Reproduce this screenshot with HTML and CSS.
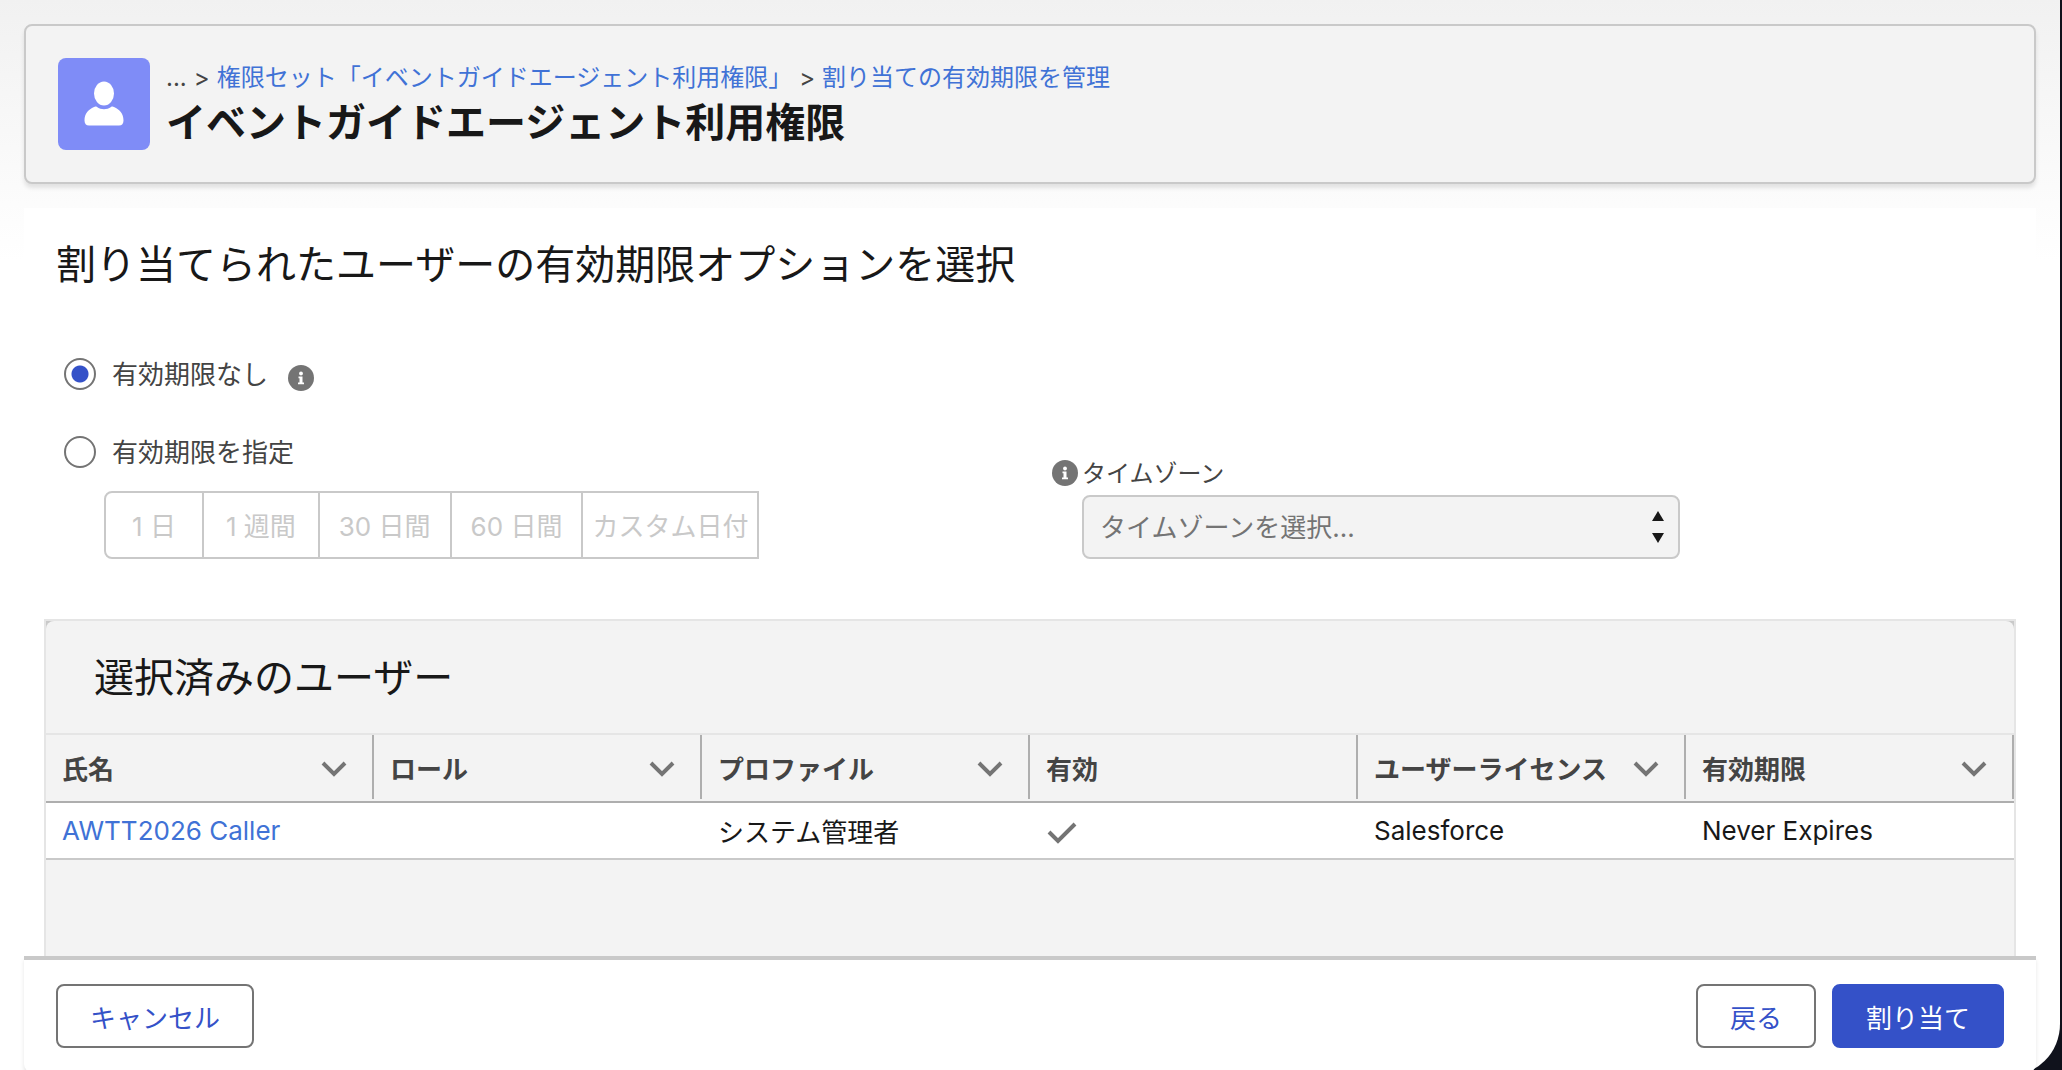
FILE: index.html
```html
<!DOCTYPE html>
<html lang="ja">
<head>
    <meta charset="UTF-8">
    <title>割り当ての有効期限を管理</title>
    <link rel="stylesheet" href="styles.css">
</head>
<body>
    <div class="window">
        <header class="page-header">
            <div class="header-icon">
                <svg width="40" height="46" viewBox="0 0 40 46" fill="#fff">
                    <ellipse cx="20" cy="12.5" rx="10" ry="12"/>
                    <path d="M13 26c2 1.500 4.500 2.200 7 2.200s5-.7 7-2.200c1-.7 2-.6 3 0 5.500 2.400 9.500 6.500 9.500 13.500 0 3-1.500 5-4.500 5H5c-3 0-4.500-2-4.500-5C.5 32.500 4.500 28.400 10 26c1-.6 2-.7 3 0z"/>
                </svg>
            </div>
            <div class="header-text">
                <nav class="breadcrumb">
                    <span>...</span>
                    <span>&gt;</span>
                    <a href="#">権限セット「イベントガイドエージェント利用権限」</a>
                    <span>&gt;</span>
                    <a href="#">割り当ての有効期限を管理</a>
                </nav>
                <h1>イベントガイドエージェント利用権限</h1>
            </div>
        </header>

        <main>
            <h2 class="section-title">割り当てられたユーザーの有効期限オプションを選択</h2>

            <form class="options">
                <div class="expiration">
                    <div class="radio-row">
                        <input type="radio" id="noExpiration" name="expiration" checked>
                        <label for="noExpiration">有効期限なし</label>
                        <svg class="info" viewBox="0 0 26 26">
                            <circle cx="13" cy="13" r="13" fill="#747474"/>
                            <circle cx="13" cy="8.500" r="1.900" fill="#fff"/>
                            <path d="M10.500 11.500h4v6h1.500v1.800h-6v-1.800h1.500v-4.200h-1z" fill="#fff"/>
                        </svg>
                    </div>
                    <div class="radio-row">
                        <input type="radio" id="setExpiration" name="expiration">
                        <label for="setExpiration">有効期限を指定</label>
                    </div>
                    <div class="button-group">
                        <button type="button" class="day" disabled>1 日</button>
                        <button type="button" class="week" disabled>1 週間</button>
                        <button type="button" disabled>30 日間</button>
                        <button type="button" disabled>60 日間</button>
                        <button type="button" class="custom" disabled>カスタム日付</button>
                    </div>
                </div>

                <div class="timezone">
                    <div class="timezone-label">
                        <svg class="info" viewBox="0 0 26 26">
                            <circle cx="13" cy="13" r="13" fill="#747474"/>
                            <circle cx="13" cy="8.500" r="1.900" fill="#fff"/>
                            <path d="M10.500 11.500h4v6h1.500v1.800h-6v-1.800h1.500v-4.200h-1z" fill="#fff"/>
                        </svg>
                        <label for="timezone">タイムゾーン</label>
                    </div>
                    <div class="select-wrap">
                        <select id="timezone" disabled>
                            <option>タイムゾーンを選択...</option>
                        </select>
                        <svg class="select-arrows" width="12" height="32" viewBox="0 0 12 32" fill="#181818">
                            <path d="M6 0l6 10H0z"/>
                            <path d="M6 32l6-10H0z"/>
                        </svg>
                    </div>
                </div>
            </form>

            <section class="users">
                <h2 class="users-title">選択済みのユーザー</h2>
                <table>
                    <thead>
                        <tr>
                            <th><div class="head-cell">氏名<svg class="chevron" viewBox="0 0 26 16"><path d="M2 2l11 11L24 2"/></svg></div></th>
                            <th><div class="head-cell">ロール<svg class="chevron" viewBox="0 0 26 16"><path d="M2 2l11 11L24 2"/></svg></div></th>
                            <th><div class="head-cell">プロファイル<svg class="chevron" viewBox="0 0 26 16"><path d="M2 2l11 11L24 2"/></svg></div></th>
                            <th><div class="head-cell">有効</div></th>
                            <th><div class="head-cell">ユーザーライセンス<svg class="chevron" viewBox="0 0 26 16"><path d="M2 2l11 11L24 2"/></svg></div></th>
                            <th><div class="head-cell">有効期限<svg class="chevron" viewBox="0 0 26 16"><path d="M2 2l11 11L24 2"/></svg></div></th>
                        </tr>
                    </thead>
                    <tbody>
                        <tr>
                            <td><a href="#">AWTT2026 Caller</a></td>
                            <td></td>
                            <td>システム管理者</td>
                            <td><svg class="check" viewBox="0 0 32 22"><path d="M3 10l9 9L29 2"/></svg></td>
                            <td>Salesforce</td>
                            <td>Never Expires</td>
                        </tr>
                    </tbody>
                </table>
                <div class="users-empty"></div>
            </section>
        </main>

        <footer>
            <button type="button" class="btn">キャンセル</button>
            <div class="footer-right">
                <button type="button" class="btn">戻る</button>
                <button type="button" class="btn brand">割り当て</button>
            </div>
        </footer>
    </div>
</body>
</html>
```

FILE: styles.css
```css
* {box-sizing: border-box}
body {
    margin: 0;
    height: 100vh;
    overflow: hidden;
    background-color: #10121c;
    color: #181818;
    font-family: Inter, "Noto Sans CJK JP", sans-serif;
    font-size: 26px;
}
a {
    color: #4072d6;
    text-decoration: none;
}
h1, h2 {
    margin: 0;
    font-size: 40px;
}
button, select {
    font-family: inherit;
    font-size: 26px;
}
.window {
    display: flex;
    flex-direction: column;
    height: calc(100vh + 6px);
    margin-right: 2px;
    padding: 24px 24px 4px;
    border-bottom-right-radius: 52px;
    background: linear-gradient(#f1f1f1, #fff 260px);
}

/* Header */
.page-header {
    display: flex;
    gap: 16px;
    padding: 32px;
    border: 2px solid #c9c9c9;
    border-radius: 8px;
    background-color: #f3f3f3;
    box-shadow: 0 4px 4px rgba(0,0,0,0.1);
}
.header-icon {
    display: flex;
    align-items: center;
    justify-content: center;
    width: 92px;
    height: 92px;
    border-radius: 8px;
    background-color: #7f8cf7;
}
.breadcrumb {
    display: flex;
    gap: 7px;
    font-size: 24px;
    line-height: 40px;
    color: #444;
}
.page-header h1 {
    line-height: 50px;
}

/* Options */
main {
    flex: 1;
    display: flex;
    flex-direction: column;
    min-height: 0;
    margin-top: 24px;
    padding: 32px 20px 0;
    background-color: #fff;
}
.section-title {
    padding-left: 12px;
    font-weight: 400;
    line-height: 50px;
}
.options {
    display: grid;
    grid-template-columns: 1fr 1fr;
    align-items: end;
    padding: 68px 0 60px;
}
.radio-row {
    display: flex;
    align-items: center;
    gap: 16px;
    height: 32px;
    margin-bottom: 46px;
    padding-left: 20px;
    color: #444;
}
.radio-row + .radio-row {
    margin-bottom: 23px;
}
.options label {
    padding-bottom: 4px;
}
.radio-row input {
    appearance: none;
    width: 32px;
    height: 32px;
    margin: 0;
    border: 2px solid #747474;
    border-radius: 50%;
    background-color: #fff;
}
.radio-row input:checked {
    background: radial-gradient(circle, #3451c8 8px, #fff 9px);
}
.info {
    flex: none;
    width: 26px;
    height: 26px;
}
.radio-row .info {
    margin: 8px 0 0 4px;
}
.button-group {
    display: flex;
    margin-left: 60px;
}
.button-group button {
    height: 68px;
    margin-left: -2px;
    padding: 0 19px 2px;
    border: 2px solid #c9c9c9;
    background-color: #fff;
    color: #c9c9c9;
}
.button-group .day {
    margin-left: 0;
    padding: 0 26px 2px;
    border-radius: 8px 0 0 8px;
}
.button-group .week {
    padding: 0 22px 2px;
}
.button-group .custom {
    padding: 0 9px 2px;
}
.timezone {
    padding-left: 52px;
}
.timezone-label {
    display: flex;
    align-items: center;
    gap: 4px;
    height: 44px;
    margin-left: -30px;
    font-size: 24px;
    color: #444;
}
.select-wrap {
    position: relative;
    max-width: 598px;
}
.select-wrap select {
    appearance: none;
    display: block;
    width: 100%;
    height: 64px;
    padding: 0 16px;
    border: 2px solid #c9c9c9;
    border-radius: 8px;
    background-color: #f3f3f3;
    color: #747474;
    opacity: 1;
}
.select-arrows {
    position: absolute;
    top: 16px;
    right: 16px;
}

/* Selected users */
.users {
    flex: 1;
    display: flex;
    flex-direction: column;
    border: 2px solid #e5e5e5;
    border-bottom: none;
    background-color: #c9c9c9;
}
.users-title {
    padding: 32px 48px 30px;
    border-radius: 8px 8px 0 0;
    background-color: #f3f3f3;
    font-weight: 400;
    line-height: 50px;
}
table {
    width: 100%;
    table-layout: fixed;
    border-spacing: 0;
    border-top: 2px solid #e5e5e5;
    background-color: #fff;
}
th {
    padding: 0 0 2px;
    border-bottom: 2px solid #aeaeae;
    background-color: #f3f3f3;
    color: #444;
}
.head-cell {
    display: flex;
    align-items: center;
    justify-content: space-between;
    height: 64px;
    padding: 0 25px 0 16px;
    border-right: 2px solid #aeaeae;
    white-space: nowrap;
}
.chevron, .check {
    fill: none;
    stroke: #747474;
    stroke-width: 4;
}
.chevron {
    width: 26px;
    height: 16px;
    margin-top: 4px;
}
td {
    height: 57px;
    padding: 0 16px;
    border-bottom: 2px solid #c9c9c9;
}
.check {
    display: block;
    width: 32px;
    height: 22px;
    margin-top: 4px;
}
.users-empty {
    flex: 1;
    background-color: #f3f3f3;
}

/* Footer */
footer {
    display: flex;
    justify-content: space-between;
    padding: 24px 32px;
    border-top: 4px solid #c9c9c9;
    border-radius: 0 0 8px 8px;
    background-color: #fff;
    box-shadow: 0 4px 4px rgba(0,0,0,0.1);
}
.footer-right {
    display: flex;
    gap: 16px;
}
.btn {
    height: 64px;
    padding: 0 32px;
    border: 2px solid #747474;
    border-radius: 8px;
    background-color: #fff;
    color: #3451c8;
    cursor: pointer;
}
.btn.brand {
    border-color: #3451c8;
    background-color: #3451c8;
    color: #fff;
}
```
